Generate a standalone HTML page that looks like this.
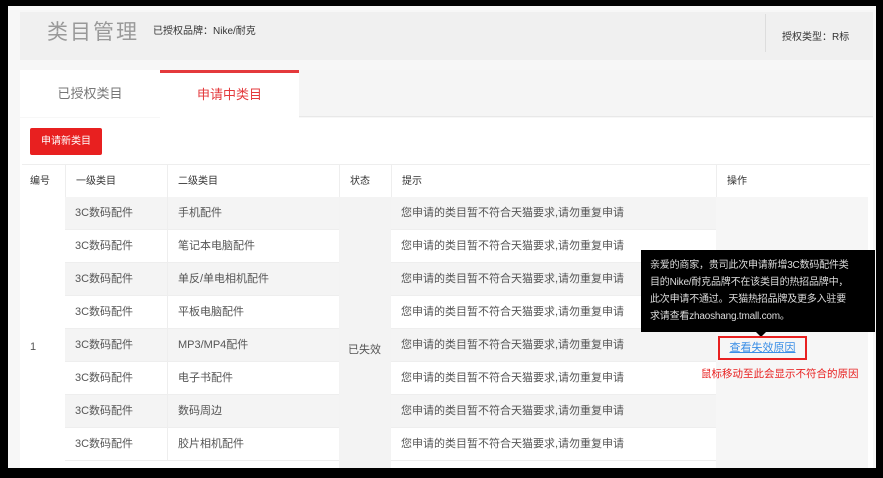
<!DOCTYPE html><html><head><meta charset="utf-8"><style>
*{margin:0;padding:0;box-sizing:border-box}
body{width:883px;height:478px;background:#000;position:relative;overflow:hidden;font-family:"Liberation Sans","Noto Sans CJK SC",sans-serif;font-size:11px;color:#555}
.a{position:absolute}
.frame{left:8px;top:6px;width:868px;height:462px;background:#f7f7f7}
.c{position:absolute;height:33px;line-height:33px;padding-left:10px;white-space:nowrap}
</style></head><body>
<div class="a frame"></div>
<div class="a" style="left:20px;top:12px;width:853px;height:48px;background:#f0f0f0"></div>
<div class="a" style="left:47px;top:16px;font-size:21px;color:#999;letter-spacing:2px">类目管理</div>
<div class="a" style="left:153px;top:22px;font-size:10px;color:#333">已授权品牌：Nike/耐克</div>
<div class="a" style="left:765px;top:14px;width:1px;height:38px;background:#ddd"></div>
<div class="a" style="left:782px;top:28px;font-size:10px;color:#333">授权类型：R标</div>
<div class="a" style="left:20px;top:70px;width:853px;height:47px;background:#f5f5f5;border-bottom:1px solid #e8e8e8"></div>
<div class="a" style="left:20px;top:70px;width:140px;height:47px;background:#fff;text-align:center;line-height:47px;font-size:13px;color:#777">已授权类目</div>
<div class="a" style="left:160px;top:70px;width:139px;height:48px;background:#fff;border-top:3px solid #e4393c;text-align:center;line-height:44px;font-size:13px;color:#e4393c">申请中类目</div>
<div class="a" style="left:20px;top:118px;width:853px;height:350px;background:#fff"></div>
<div class="a" style="left:30px;top:128px;width:72px;height:27px;background:#e82020;color:#fff;text-align:center;line-height:27px;font-size:10px;border-radius:2px">申请新类目</div>
<div class="a" style="left:22px;top:164px;width:848px;height:33px;background:#fff;font-size:10px;color:#333;border-top:1px solid #eee">
<div class="c" style="left:0;padding-left:8px">编号</div><div class="c" style="left:43px;border-left:1px solid #eee">一级类目</div><div class="c" style="left:145px;border-left:1px solid #eee">二级类目</div><div class="c" style="left:317px;border-left:1px solid #eee">状态</div><div class="c" style="left:369px;border-left:1px solid #eee">提示</div><div class="c" style="left:694px;border-left:1px solid #eee">操作</div>
</div>
<div class="a" style="left:22px;top:197px;width:43px;height:271px;background:#fff"></div>
<div class="a" style="left:339px;top:197px;width:52px;height:271px;background:#f3f3f3"></div>
<div class="a" style="left:716px;top:197px;width:152px;height:271px;background:#f6f6f6"></div>
<div class="a" style="left:30px;top:341px">1</div>
<div class="a" style="left:348px;top:341px">已失效</div>
<div id="rows"></div>
<script>
var s=["手机配件","笔记本电脑配件","单反/单电相机配件","平板电脑配件","MP3/MP4配件","电子书配件","数码周边","胶片相机配件"],h="";
for(var i=0;i<8;i++){var t=197+i*33,bg=i%2?"#fff":"#f4f4f4";
h+='<div class="c" style="left:65px;top:'+t+'px;width:102px;background:'+bg+';border-bottom:1px solid #eee">3C数码配件</div>';
h+='<div class="c" style="left:167px;top:'+t+'px;width:172px;background:'+bg+';border-left:1px solid #eee;border-bottom:1px solid #eee">'+s[i]+'</div>';
h+='<div class="c" style="left:391px;top:'+t+'px;width:325px;background:'+bg+';border-bottom:1px solid #eee">您申请的类目暂不符合天猫要求,请勿重复申请</div>';}
document.getElementById("rows").innerHTML=h;
</script>
<div class="a" style="left:641px;top:250px;width:234px;height:82px;background:#000;color:#ddd;font-size:10px;line-height:17px;padding:7px 9px;white-space:nowrap;letter-spacing:-0.2px">亲爱的商家，贵司此次申请新增3C数码配件类<br>目的Nike/耐克品牌不在该类目的热招品牌中，<br>此次申请不通过。天猫热招品牌及更多入驻要<br>求请查看zhaoshang.tmall.com。</div>
<div class="a" style="left:756px;top:332px;width:0;height:0;border-left:5px solid transparent;border-right:5px solid transparent;border-top:5px solid #000"></div>
<div class="a" style="left:718px;top:336px;width:89px;height:24px;border:2px solid #e82020;text-align:center;line-height:20px;color:#3a8ee6;text-decoration:underline">查看失效原因</div>
<div class="a" style="left:701px;top:366px;color:#e82020;font-size:10.5px">鼠标移动至此会显示不符合的原因</div>
</body></html>
